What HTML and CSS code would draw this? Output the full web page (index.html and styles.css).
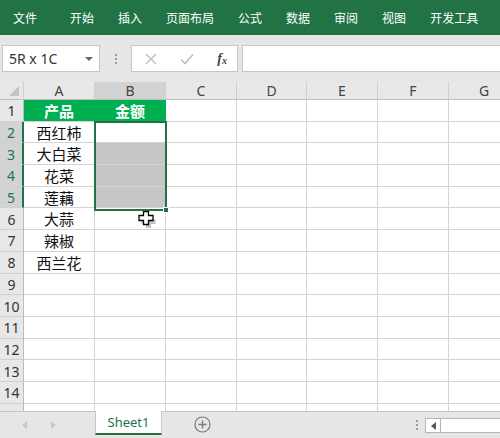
FILE: index.html
```html
<!DOCTYPE html>
<html>
<head>
<meta charset="utf-8">
<link rel="stylesheet" href="styles.css">
</head>
<body>
<div class="app">
  <div class="ribbon">
    <span class="tab first">文件</span>
    <span class="tab">开始</span>
    <span class="tab">插入</span>
    <span class="tab">页面布局</span>
    <span class="tab">公式</span>
    <span class="tab">数据</span>
    <span class="tab">审阅</span>
    <span class="tab">视图</span>
    <span class="tab">开发工具</span>
  </div>
  <div class="fbar">
    <div class="namebox"><span>5R x 1C</span><svg class="dd" width="8" height="5" viewBox="0 0 8 5"><path d="M0 0h8L4 4z" fill="#666"/></svg></div>
    <div class="vdots"><i></i><i></i><i></i></div>
    <div class="fbtns">
      <svg width="12" height="12" viewBox="0 0 12 12"><path d="M1 1L11 11M11 1L1 11" stroke="#bdbdbd" stroke-width="1.4"/></svg>
      <svg width="14" height="12" viewBox="0 0 14 12"><path d="M1 6.5L5 10.5L13 1.5" stroke="#bdbdbd" stroke-width="1.6" fill="none"/></svg>
      <span class="fx">f<sub>x</sub></span>
    </div>
    <div class="finput"></div>
  </div>
  <div class="sheet">
    <div class="grid">
      <div class="ch corner"><svg width="10" height="10" viewBox="0 0 10 10"><path d="M10 0V10H0z" fill="#c4c4c4"/></svg></div>
      <div class="ch">A</div><div class="ch sel">B</div><div class="ch">C</div><div class="ch">D</div><div class="ch">E</div><div class="ch">F</div><div class="ch">G</div>

      <div class="rh">1</div><div class="c hd">产品</div><div class="c hd">金额</div><div class="c"></div><div class="c"></div><div class="c"></div><div class="c"></div><div class="c"></div>
      <div class="rh rs">2</div><div class="c">西红柿</div><div class="c"></div><div class="c"></div><div class="c"></div><div class="c"></div><div class="c"></div><div class="c"></div>
      <div class="rh rs">3</div><div class="c">大白菜</div><div class="c g"></div><div class="c"></div><div class="c"></div><div class="c"></div><div class="c"></div><div class="c"></div>
      <div class="rh rs">4</div><div class="c">花菜</div><div class="c g"></div><div class="c"></div><div class="c"></div><div class="c"></div><div class="c"></div><div class="c"></div>
      <div class="rh rs">5</div><div class="c">莲藕</div><div class="c g"></div><div class="c"></div><div class="c"></div><div class="c"></div><div class="c"></div><div class="c"></div>
      <div class="rh">6</div><div class="c">大蒜</div><div class="c"></div><div class="c"></div><div class="c"></div><div class="c"></div><div class="c"></div><div class="c"></div>
      <div class="rh">7</div><div class="c">辣椒</div><div class="c"></div><div class="c"></div><div class="c"></div><div class="c"></div><div class="c"></div><div class="c"></div>
      <div class="rh">8</div><div class="c">西兰花</div><div class="c"></div><div class="c"></div><div class="c"></div><div class="c"></div><div class="c"></div><div class="c"></div>
      <div class="rh">9</div><div class="c"></div><div class="c"></div><div class="c"></div><div class="c"></div><div class="c"></div><div class="c"></div><div class="c"></div>
      <div class="rh">10</div><div class="c"></div><div class="c"></div><div class="c"></div><div class="c"></div><div class="c"></div><div class="c"></div><div class="c"></div>
      <div class="rh">11</div><div class="c"></div><div class="c"></div><div class="c"></div><div class="c"></div><div class="c"></div><div class="c"></div><div class="c"></div>
      <div class="rh">12</div><div class="c"></div><div class="c"></div><div class="c"></div><div class="c"></div><div class="c"></div><div class="c"></div><div class="c"></div>
      <div class="rh">13</div><div class="c"></div><div class="c"></div><div class="c"></div><div class="c"></div><div class="c"></div><div class="c"></div><div class="c"></div>
      <div class="rh">14</div><div class="c"></div><div class="c"></div><div class="c"></div><div class="c"></div><div class="c"></div><div class="c"></div><div class="c"></div>
      <div class="rh"></div><div class="c"></div><div class="c"></div><div class="c"></div><div class="c"></div><div class="c"></div><div class="c"></div><div class="c"></div>
    </div>
    <div class="selbox"></div>
    <div class="handle"></div>
    <svg class="cursor" width="20" height="17" viewBox="0 0 20 17">
      <path d="M7.5 2.5h5v4h4.5v5h-4.5v4h-5v-4h-4.5v-5h4.5z" fill="#888" opacity="0.5" transform="translate(1.5,1.5)"/>
      <path d="M6.5 0.5h5v4h4.5v5h-4.5v4h-5v-4h-4.5v-5h4.5z" fill="#fff" stroke="#000" stroke-width="1.3"/>
    </svg>
  </div>
  <div class="tabbar">
    <div class="nav">
      <svg width="6" height="8" viewBox="0 0 6 8"><path d="M5 0V8L0 4z" fill="#c8c8c8"/></svg>
      <svg width="6" height="8" viewBox="0 0 6 8"><path d="M1 0V8L6 4z" fill="#c8c8c8"/></svg>
    </div>
    <div class="stab">Sheet1</div>
    <svg class="plus" width="17" height="17" viewBox="0 0 17 17"><circle cx="8.5" cy="8.5" r="7.5" fill="none" stroke="#7a7a7a" stroke-width="1.2"/><path d="M8.5 4.5v8M4.5 8.5h8" stroke="#7a7a7a" stroke-width="1.4"/></svg>
    <div class="spacer"></div>
    <div class="vdots small"><i></i><i></i><i></i></div>
    <div class="hscroll"><div class="sbtn"><svg width="5" height="8" viewBox="0 0 5 8"><path d="M5 0V8L0 4z" fill="#555"/></svg></div></div>
  </div>
</div>
</body>
</html>
```
FILE: styles.css
```css
* { box-sizing: border-box; }
html, body { margin: 0; padding: 0; }
body { width: 500px; height: 438px; overflow: hidden; background: #e6e6e6; font-family: "Noto Sans CJK SC", "Noto Sans", sans-serif; }
.app { width: 500px; height: 438px; display: flex; flex-direction: column; overflow: hidden; }

.ribbon { height: 35px; background: #217346; display: flex; align-items: center; gap: 24px; padding-left: 13px; flex-shrink: 0; }
.tab { color: #fff; font-size: 12px; line-height: 12px; white-space: nowrap; }
.tab.first { margin-right: 9px; }

.fbar { height: 47px; flex-shrink: 0; display: flex; align-items: flex-start; padding-top: 10px; padding-left: 2px; background: #e6e6e6; }
.namebox { width: 98px; height: 27px; background: #fff; border: 1px solid #c6c6c6; display: flex; align-items: center; justify-content: space-between; padding: 0 6px 0 6px; font-family: "Noto Sans", sans-serif; font-size: 14px; color: #333; }
.namebox .dd { margin-top: 1px; }
.vdots { width: 31px; height: 27px; display: flex; flex-direction: column; align-items: center; justify-content: center; gap: 2px; }
.vdots i { display: block; width: 2px; height: 2px; background: #9a9a9a; }
.fbtns { width: 107px; height: 27px; background: #fff; border: 1px solid #c6c6c6; display: flex; align-items: center; justify-content: space-between; padding: 0 10px 0 13px; }
.fx { font-family: "Liberation Serif", serif; font-style: italic; font-size: 14px; color: #444; font-weight: bold; }
.fx sub { font-size: 10px; vertical-align: -1px; }
.finput { flex: 1; height: 27px; margin-left: 4px; background: #fff; border: 1px solid #c6c6c6; border-right: 0; }

.sheet { position: relative; height: 329px; flex-shrink: 0; overflow: hidden; background: #fff; }
.grid { display: grid; grid-template-columns: 24px 71px 71px 71px 70px 71px 71px 71px; grid-template-rows: 18px; grid-auto-rows: 21.7px; }
.ch { background: #e8e8e8; border-right: 1px solid #cfcfcf; border-bottom: 1px solid #bcbcbc; font-family: "Noto Sans", sans-serif; font-size: 14px; color: #444; display: flex; align-items: center; justify-content: center; line-height: 1; }
.ch.corner { align-items: flex-end; justify-content: flex-end; padding: 0 4px 3px 0; }
.ch.sel { background: #d3d3d3; }
.rh { background: #e8e8e8; border-right: 1px solid #bcbcbc; border-bottom: 1px solid #cfcfcf; font-family: "Noto Sans", sans-serif; font-size: 14px; color: #333; display: flex; align-items: center; justify-content: center; line-height: 1; padding-top: 2px; }
.rh.rs { background: #d3d3d3; color: #217346; border-right: 2px solid #217346; }
.c { border-right: 1px solid #d4d4d4; border-bottom: 1px solid #d4d4d4; font-size: 15px; color: #111; display: flex; align-items: center; justify-content: center; line-height: 1; white-space: nowrap; }
.c.hd { background: #00b050; color: #fff; font-weight: bold; border-right-color: #00b050; }
.c.g { background: #c6c6c6; }

.selbox { position: absolute; left: 94px; top: 39px; width: 73px; height: 90px; border: 2px solid #217346; }
.handle { position: absolute; left: 163px; top: 125px; width: 6px; height: 6px; background: #217346; border: 1px solid #fff; }
.cursor { position: absolute; left: 137px; top: 129px; }

.tabbar { flex: 1; display: flex; align-items: flex-start; background: #e6e6e6; border-top: 1px solid #c6c6c6; }
.nav { width: 95px; height: 25px; display: flex; align-items: center; gap: 22px; padding-left: 22px; }
.stab { width: 67px; height: 24px; margin-top: -1px; background: #fff; border-left: 1px solid #c6c6c6; border-right: 1px solid #c6c6c6; border-bottom: 2px solid #217346; color: #217346; font-family: "Noto Sans", sans-serif; font-size: 13px; display: flex; align-items: center; justify-content: center; }
.plus { margin-left: 32px; margin-top: 4px; }
.spacer { flex: 1; }
.vdots.small { width: 16px; height: 25px; gap: 2px; }
.hscroll { width: 75px; height: 15px; margin-top: 6px; margin-left: 0; background: #fff; border: 1px solid #b5b5b5; border-right: 0; display: flex; }
.sbtn { width: 15px; height: 13px; border-right: 1px solid #b5b5b5; display: flex; align-items: center; justify-content: center; }
```
